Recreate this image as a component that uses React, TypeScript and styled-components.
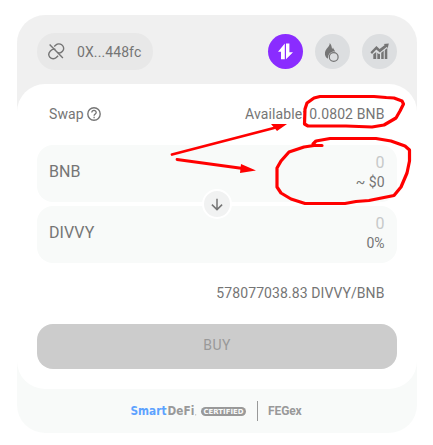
import React from 'react';
import styled, { createGlobalStyle } from 'styled-components';

const GlobalStyle = createGlobalStyle`
  *, *::before, *::after { box-sizing: border-box; }
  body {
    margin: 0;
    background: #fff;
    font-family: Roboto, "Liberation Sans", sans-serif;
    font-size: 14px;
    color: #757575;
  }
`;

const Page = styled.main`
  position: relative;
  width: 433px;
  height: 445px;
  padding: 15px 16px 0 17px;
  overflow: hidden;
`;

const Card = styled.section`
  height: 418px;
  border-radius: 28px;
  overflow: hidden;
  background: linear-gradient(#f0f0f0 0 200px, #f8faf9 200px);
`;

const Header = styled.header`
  display: flex;
  align-items: center;
  justify-content: space-between;
  height: 69px;
  padding: 4px 20px 0;
`;

const Wallet = styled.button`
  display: flex;
  align-items: center;
  gap: 12px;
  width: 116px;
  height: 37px;
  padding: 0 0 0 11px;
  border: 0;
  border-radius: 18px;
  background: #e8e8e8;
  color: #757575;
  font: 400 14px/20px Roboto, sans-serif;
  letter-spacing: 0.1px;
`;

const Modes = styled.nav`
  display: flex;
  gap: 12px;
`;

const ModeButton = styled.button<{ $active?: boolean }>`
  display: grid;
  place-items: center;
  width: 35px;
  height: 35px;
  padding: 0;
  border: 0;
  border-radius: 50%;
  background: ${(p) => (p.$active ? '#8a2cff' : '#dcdee0')};
  color: ${(p) => (p.$active ? '#fff' : '#757575')};
`;

const Panel = styled.div`
  display: flex;
  flex-direction: column;
  height: 305px;
  padding: 20px;
  border-radius: 28px;
  background: #fff;
`;

const TitleRow = styled.div`
  display: flex;
  justify-content: space-between;
  align-items: center;
  height: 20px;
  padding: 0 12.5px 0 12px;
  margin-bottom: 21px;
  letter-spacing: 0.12px;
`;

const Title = styled.div`
  display: flex;
  align-items: center;
  gap: 3px;
`;

const Fields = styled.div`
  position: relative;
  display: grid;
  gap: 4px;
`;

const Field = styled.div`
  display: flex;
  justify-content: space-between;
  height: 57px;
  padding: 7px 12.5px 0 12px;
  border-radius: 16px;
  background: #f8faf9;
`;

const Token = styled.span`
  font-size: 16px;
  line-height: 39px;
  letter-spacing: 0.1px;
`;

const Amounts = styled.div`
  text-align: right;
`;

const Amount = styled.div`
  height: 20px;
  color: #c7c9c9;
  font-size: 16px;
  line-height: 22px;
`;

const Worth = styled.div`
  font-size: 14px;
  line-height: 20px;
`;

const Direction = styled.button`
  position: absolute;
  left: 165px;
  top: 44px;
  display: grid;
  place-items: center;
  width: 30px;
  height: 30px;
  padding: 0;
  border: 2px solid #fff;
  border-radius: 50%;
  background: #f1f2f2;
  color: #757575;
`;

const Rate = styled.div`
  height: 20px;
  margin: 20px 12.5px 0 0;
  line-height: 20px;
  text-align: right;
  letter-spacing: 0.09px;
`;

const Buy = styled.button`
  height: 45px;
  margin-top: 21px;
  padding: 0 0 3px;
  border: 0;
  border-radius: 16px;
  background: #ccc;
  color: #999;
  font: 400 14px/20px Roboto, sans-serif;
  letter-spacing: 0.4px;
`;

const Footer = styled.footer`
  display: flex;
  align-items: center;
  height: 44px;
  padding-left: 113px;
  color: #999;
`;

const Divider = styled.span`
  width: 1px;
  height: 20px;
  margin: 0 10px 0 10px;
  background: #999;
`;

const Exchange = styled.span`
  font-size: 12px;
  font-weight: 700;
  letter-spacing: -0.1px;
`;

const Markup = styled.svg`
  position: absolute;
  inset: 0;
  pointer-events: none;
`;

const UnlinkIcon = () => (
  <svg width="17" height="17" viewBox="0 0 17 17" fill="none" stroke="currentColor" strokeWidth="1.4">
    <path d="M1.6 1.6 14.9 14.9" />
    <path d="M6.2 3.6 7.9 2C9.3.7 12 .5 13.7 1.8c2.4 1.8 2.6 4.7.8 6.5-1.5 1.6-3.4 2.1-5 .9" />
    <path d="M7.4 6.5C5.7 5.7 3.8 6.5 2.4 7.9.6 9.8.3 12.3 1.9 14.2c1.8 2 4.7 2 6.4.3l1.8-1.8" />
  </svg>
);

const SwapIcon = () => (
  <svg width="17" height="17" viewBox="0 0 17 17" fill="currentColor">
    <path d="M7.8 .5v15.7H4V8.8H1zM9 16.2V.5H12.4v8.7H16z" />
  </svg>
);

const BurnIcon = () => (
  <svg width="17" height="20" viewBox="0.5 -0.5 17 20" fill="none">
    <path d="M6.2.5C6.6 4 2.2 5.8 1.5 10c-.5 3 .8 5 3 6.3-.4-2 .6-5.2 3.2-6.6 1.5-.8 3-.7 4-.3C11.4 7.8 10 6.6 9.5 5c-.5.7-.7 1.3-.9 1.8C8.3 4.2 7.8 2 6.2.5Z" fill="currentColor" />
    <circle cx="10.2" cy="14.5" r="4.4" fill="#dcdee0" stroke="currentColor" strokeWidth="1.2" />
  </svg>
);

const ChartIcon = () => (
  <svg width="19" height="17" viewBox="0 0 19 17" fill="currentColor">
    <path d="m.4 9.3 6-6.2 3.2 2.9L14.8 2 13.7.9l5.1-.5-1 4.7-1.1-1.2-6.9 5.6-3.5-2.9-4.3 4.3z" />
    <path d="M3.3 11.2 6.2 9v7H3.3zM7.3 9.8l1.8 1.5.9-.7V16H7.3zM11.2 9.8l2.5-2V16h-2.5zM14.8 7l2.5-2v11h-2.5z" />
  </svg>
);

const HelpIcon = () => (
  <svg width="14" height="14" viewBox="0 0 14 14" fill="none" stroke="currentColor" strokeWidth="1.4">
    <circle cx="7" cy="7" r="6.2" />
    <path d="M4.8 5.6a2.2 2.2 0 0 1 4.4-.1C9.2 7 7.1 7 7.1 8.8M7.1 9.8v1.4" strokeWidth="1.3" />
  </svg>
);

const DownIcon = () => (
  <svg width="12" height="13" viewBox="0 0 12 13" fill="none" stroke="currentColor" strokeWidth="1.5">
    <path d="M6 .8v10.8M.9 6.6 6 11.6l5.1-5" />
  </svg>
);

const SmartDefiLogo = () => (
  <svg width="117" height="16" viewBox="0 0 117 16" fontFamily="'DejaVu Sans', sans-serif" fontWeight="700">
    <text x="0.5" y="12.4" fontSize="12" textLength="36" lengthAdjust="spacingAndGlyphs" fill="#5da2ff">Smart</text>
    <text x="37.6" y="12.4" fontSize="12" textLength="26.7" lengthAdjust="spacingAndGlyphs" fill="#999">DeFi</text>
    <circle cx="65.7" cy="11.8" r=".6" fill="#aaa" />
    <rect x="71" y="4" width="45" height="9" rx="4.5" fill="#999" />
    <text x="73.5" y="11" fontSize="7" textLength="40" lengthAdjust="spacingAndGlyphs" fill="#f8faf9">CERTIFIED</text>
  </svg>
);

const Annotations = () => (
  <Markup width="433" height="445" viewBox="0 0 433 445" fill="none" stroke="#f00" strokeWidth="3.2" strokeLinejoin="round" strokeLinecap="round">
    <path d="M386 97.500 374 96.500H320L314 98 307 103 305 109 304.500 124 308 126H346L372 127 384 125 396 118 400 111 403.500 104 402 101 394 98 386 97.500" />
    <path d="M322 145.500H314L304 147 289 152 281 161 277 168V187L281 193 291 199 305 203.500H345L356 201.500 369 200.500 394 195.500 401 187 407 173 409.500 161V150L405 146 391 141 376 138.500H330L316 141 313 144" />
    <path d="M172 154.500 274 128M177 159.500 243 168.500" strokeWidth="2.8" />
    <path d="m287 124-16 0 6 7zM256 170.500l-15-6.500-1 9z" fill="#f00" stroke="none" />
  </Markup>
);

export default function App() {
  return (
    <>
      <GlobalStyle />
      <Page>
        <Card>
          <Header>
            <Wallet><UnlinkIcon />0X...448fc</Wallet>
            <Modes>
              <ModeButton $active aria-label="Swap"><SwapIcon /></ModeButton>
              <ModeButton aria-label="Burn"><BurnIcon /></ModeButton>
              <ModeButton aria-label="Chart"><ChartIcon /></ModeButton>
            </Modes>
          </Header>
          <Panel>
            <TitleRow>
              <Title>Swap<HelpIcon /></Title>
              <span>Available: 0.0802 BNB</span>
            </TitleRow>
            <Fields>
              <Field>
                <Token>BNB</Token>
                <Amounts><Amount>0</Amount><Worth>~ $0</Worth></Amounts>
              </Field>
              <Field>
                <Token>DIVVY</Token>
                <Amounts><Amount>0</Amount><Worth>0%</Worth></Amounts>
              </Field>
              <Direction aria-label="Reverse"><DownIcon /></Direction>
            </Fields>
            <Rate>578077038.83 DIVVY/BNB</Rate>
            <Buy>BUY</Buy>
          </Panel>
          <Footer>
            <SmartDefiLogo />
            <Divider />
            <Exchange>FEGex</Exchange>
          </Footer>
        </Card>
        <Annotations />
      </Page>
    </>
  );
}
